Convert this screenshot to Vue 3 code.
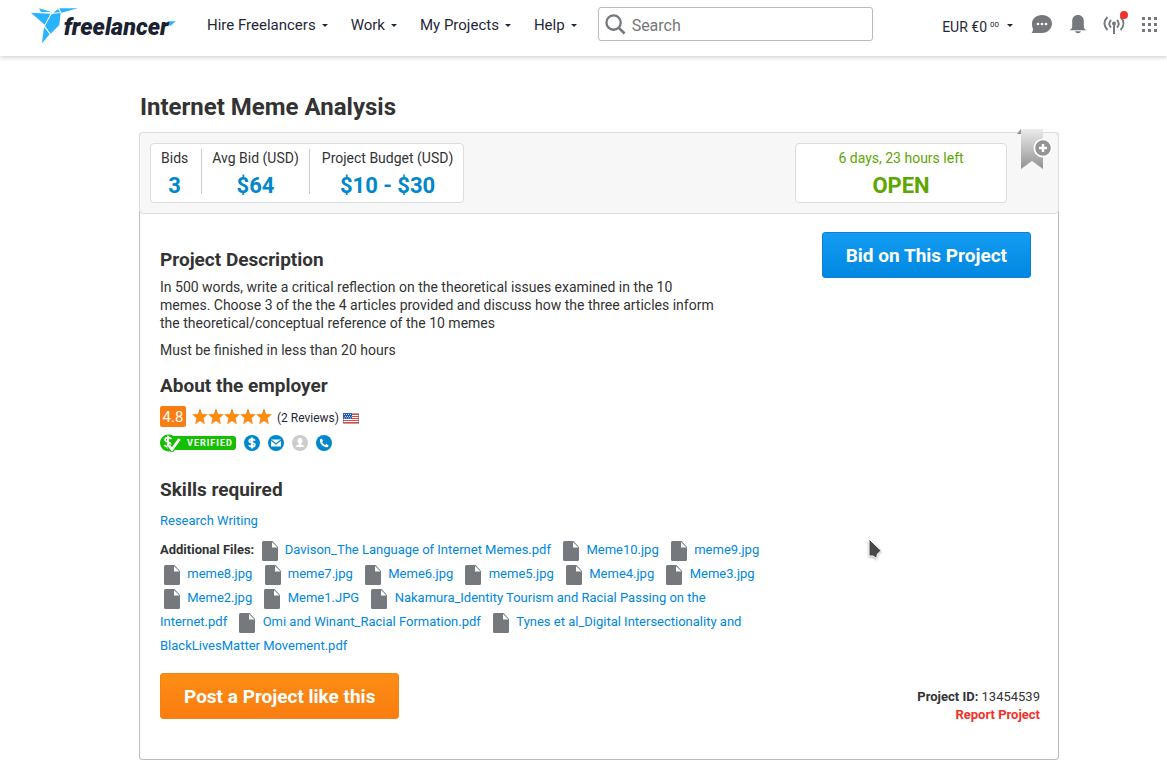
<template>
  <div class="page">
    <header class="header">
      <a href="#" class="header__logo" aria-label="freelancer">
        <svg class="logo" viewBox="93 24 435 108">
          <g fill="#29b2fe">
            <path d="M93 38L151 41L134 74Z" />
            <path d="M117 25L156 37L123 36Z" />
            <path d="M155 42L182 39L178 75L152 101L135 78Z" />
            <path d="M160 38L174 27L180 37Z" />
            <path d="M178 25H234L184 38Z" />
            <path d="M132 81L149 103L126 130Z" />
            <path d="M504 64H527L511 78L507 73Z" />
          </g>
          <text class="logo__text" x="191" y="104">freelancer</text>
        </svg>
      </a>
      <nav class="nav">
        <a v-for="item in navItems" :key="item" href="#" class="nav__link">
          {{ item }}
          <span class="caret"></span>
        </a>
      </nav>
      <label class="search">
        <svg class="search__icon" viewBox="0 0 22 22" fill="none" stroke="#75787d" stroke-width="2.400">
          <circle cx="9" cy="9" r="7.5" />
          <path d="M14.5 14.5L20.5 20.5" stroke-width="2.800" />
        </svg>
        <input class="search__input" type="text" placeholder="Search" aria-label="Search" />
      </label>
      <div class="tools">
        <a href="#" class="balance">EUR €0 <sup class="balance__cents">00</sup><span class="caret"></span></a>
        <button class="tool tool--chat" aria-label="Messages">
          <svg width="22" height="20" viewBox="0 0 22 20">
            <path d="M11 1C17 1 21 4.800 21 9.500S17 19 11 19H.5C1.500 18 2 16.500 2 15C1.300 13.500 1 11.500 1 9.500C1 4.800 5 1 11 1Z" fill="#75787d" />
            <g fill="#fff"><circle cx="7" cy="10" r="1.300" /><circle cx="11" cy="10" r="1.300" /><circle cx="15" cy="10" r="1.300" /></g>
          </svg>
        </button>
        <button class="tool tool--bell" aria-label="Notifications">
          <svg width="18" height="20" viewBox="0 0 18 20" fill="#75787d">
            <path d="M9 1C5.500 1 3.200 3.500 3.200 7V12.500C3.200 14.500 2 15.500 .2 16.300H17.800C16 15.500 14.800 14.500 14.800 12.500V7C14.800 3.500 12.500 1 9 1Z" />
            <path d="M6 17.300H12C11.500 18.600 10.500 19.200 9 19.200S6.500 18.600 6 17.300Z" />
          </svg>
        </button>
        <button class="tool tool--feed" aria-label="Feed">
          <svg width="25" height="28" viewBox="0 0 25 28">
            <g fill="none" stroke="#75787d" stroke-width="1.900">
              <path d="M4.500 7C.3 11.500 .3 15.500 4.500 20" />
              <path d="M8 10C5.700 12.500 5.700 15 8 17.500" />
              <path d="M17.500 7C21.700 11.500 21.700 15.500 17.500 20" />
              <path d="M14 10C16.300 12.500 16.300 15 14 17.500" />
              <path d="M11 13V24" stroke-width="2" />
            </g>
            <circle cx="11" cy="13.500" r="2" fill="#75787d" />
            <circle cx="21" cy="5" r="4" fill="#f0322b" />
          </svg>
        </button>
        <button class="tool" aria-label="Apps">
          <svg width="15" height="15" viewBox="0 0 15 15" fill="#75787d">
            <path d="M0 0h3v3h-3zM6 0h3v3h-3zM12 0h3v3h-3zM0 6h3v3h-3zM6 6h3v3h-3zM12 6h3v3h-3zM0 12h3v3h-3zM6 12h3v3h-3zM12 12h3v3h-3z" />
          </svg>
        </button>
      </div>
    </header>

    <main class="content">
      <h1 class="content__title">Internet Meme Analysis</h1>

      <section class="project">
        <div class="summary">
          <dl class="stats">
            <div v-for="stat in stats" :key="stat.label" class="stats__item">
              <dt class="stats__label">{{ stat.label }}</dt>
              <dd class="stats__value">{{ stat.value }}</dd>
            </div>
          </dl>
          <div class="status">
            <span class="status__time">6 days, 23 hours left</span>
            <strong class="status__state">OPEN</strong>
          </div>
          <button class="bookmark" aria-label="Bookmark project">
            <svg width="38" height="42" viewBox="0 0 38 42">
              <defs>
                <linearGradient id="ribbon" x1="0" y1="0" x2="0" y2="1">
                  <stop offset="0" stop-color="#ececec" />
                  <stop offset="1" stop-color="#929292" />
                </linearGradient>
              </defs>
              <path d="M0 5L4 0V5Z" fill="#8f8f8f" />
              <path d="M4 0H26V40L15 32L4 40Z" fill="url(#ribbon)" />
              <circle cx="26" cy="19" r="9.500" fill="#fff" />
              <circle cx="26" cy="19" r="7.800" fill="#949494" />
              <path d="M22 19H30M26 15V23" stroke="#fff" stroke-width="2.400" />
            </svg>
          </button>
        </div>

        <div class="body">
          <div class="details">
            <h2 class="heading">Project Description</h2>
            <div class="description">
              <p>In 500 words, write a critical reflection on the theoretical issues examined in the 10 memes. Choose 3 of the the 4 articles provided and discuss how the three articles inform the theoretical/conceptual reference of the 10 memes</p>
              <p>Must be finished in less than 20 hours</p>
            </div>

            <h2 class="heading heading--employer">About the employer</h2>
            <div class="rating">
              <span class="rating__score">4.8</span>
              <span class="rating__stars">
                <svg v-for="n in 5" :key="n" width="16" height="18" viewBox="0 0 16 18" fill="#fd8a13">
                  <path d="M8 0L10.200 6L16 6.200L11.500 10.200L13 16.500L8 13L3 16.500L4.500 10.200L0 6.200L5.800 6Z" />
                </svg>
              </span>
              <span class="rating__reviews">
                (2 Reviews)
                <svg width="16" height="11" viewBox="0 0 16 11" role="img" aria-label="United States">
                  <path d="M0 0H16V11H0Z" fill="#fff" />
                  <path d="M0 1.500H16M0 3.500H16M0 5.500H16M0 7.500H16M0 9.500H16" stroke="#e8452f" />
                  <path d="M0 0H9V6H0Z" fill="#1c58bd" />
                  <path d="M1 1.500H8.500M2 3.500H8.500M1 5H8.500" stroke="#c3d6f3" stroke-dasharray="1 1" />
                  <path d="M.5 .5H15.500V10.500H.5Z" fill="none" stroke="#54618e" stroke-opacity=".55" />
                </svg>
              </span>
            </div>
            <div class="badges">
              <span class="verified">
                <svg class="verified__icon" width="22" height="18" viewBox="0 0 22 18">
                  <circle cx="8.500" cy="9" r="8.500" fill="#14bf00" />
                  <path d="M11.500 5C10.500 3.800 9 3.500 7.800 3.600C5.600 3.700 4.800 5 5.300 6.300C6 8 10 7.800 10.500 10C11 12 9 13 7.300 12.800C5.800 12.600 5 11.900 4.300 11M8 1.800V14.500" fill="none" stroke="#fff" stroke-width="1.900" />
                  <path d="M9 11.500L12 15.500L19.500 5" fill="none" stroke="#14bf00" stroke-width="5" />
                  <path d="M9 11.500L12 15.500L19.500 5" fill="none" stroke="#fff" stroke-width="2.800" />
                </svg>
                VERIFIED
              </span>
              <svg width="16" height="16" viewBox="0 0 16 16">
                <circle cx="8" cy="8" r="8" fill="#0087cc" />
                <path d="M10.800 5.700C10.200 4.700 9.200 4.300 8 4.300C6.200 4.300 5.200 5.100 5.300 6.200C5.500 8.200 10.800 7.400 10.800 9.800C10.800 11 9.600 11.700 8 11.700C6.600 11.700 5.500 11.100 5 10.100M8 2.500V13.500" fill="none" stroke="#fff" stroke-width="1.900" />
              </svg>
              <svg width="16" height="16" viewBox="0 0 16 16">
                <circle cx="8" cy="8" r="8" fill="#0087cc" />
                <path d="M3 4.500H13V11.500H3Z" fill="#fff" />
                <path d="M3 5L8 9L13 5" fill="none" stroke="#0087cc" stroke-width="1.200" />
              </svg>
              <svg width="16" height="16" viewBox="0 0 16 16">
                <circle cx="8" cy="8" r="8" fill="#ccc" />
                <path d="M8 3C6.400 3 5.500 4.200 5.500 5.800C5.500 7.200 6.200 8.300 7 8.800V9.500C5.500 9.900 4 10.400 3.700 12H12.300C12 10.400 10.500 9.900 9 9.500V8.800C9.800 8.300 10.500 7.200 10.500 5.800C10.500 4.200 9.600 3 8 3Z" fill="#fff" />
              </svg>
              <svg width="16" height="16" viewBox="0 0 16 16">
                <circle cx="8" cy="8" r="8" fill="#0087cc" />
                <path d="M5.500 3.500L4 4.500C3.200 8.500 7.500 12.800 11.500 12.200L12.700 10.800L10.500 8.800L9.200 9.900C8 9.500 6.700 8.200 6.200 7L7.200 5.700Z" fill="#fff" />
              </svg>
            </div>

            <h2 class="heading heading--skills">Skills required</h2>
            <a href="#" class="skill">Research Writing</a>

            <div class="files">
              <strong>Additional Files:</strong>
              <template v-for="file in files" :key="file">
                {{ ' ' }}<svg class="files__icon" width="16" height="20" viewBox="0 0 16 20">
                  <path d="M1.500 0H10.500L16 6V18.500Q16 20 14.500 20H1.500Q0 20 0 18.500V1.500Q0 0 1.500 0Z" fill="#75787d" />
                  <path d="M10 1V6.500H15.500Z" fill="#fff" />
                </svg>&nbsp;<a href="#" class="files__link">{{ file }}</a>
              </template>
            </div>
          </div>

          <aside class="side">
            <button class="button button--bid">Bid on This Project</button>
          </aside>
        </div>

        <div class="footer">
          <button class="button button--post">Post a Project like this</button>
          <div class="footer__info">
            <div><strong>Project ID:</strong> 13454539</div>
            <a href="#" class="footer__report">Report Project</a>
          </div>
        </div>
      </section>
    </main>

    <svg class="pointer" width="14" height="22" viewBox="0 0 14 22">
      <path d="M1 1V18H5L8.500 20.500L9.500 16L13 12.500Z" fill="#484848" stroke="#fff" stroke-width="1" />
    </svg>
  </div>
</template>

<script setup>
const navItems = ['Hire Freelancers', 'Work', 'My Projects', 'Help'];

const stats = [
  { label: 'Bids', value: '3' },
  { label: 'Avg Bid (USD)', value: '$64' },
  { label: 'Project Budget (USD)', value: '$10 - $30' },
];

const files = [
  'Davison_The Language of Internet Memes.pdf',
  'Meme10.jpg',
  'meme9.jpg',
  'meme8.jpg',
  'meme7.jpg',
  'Meme6.jpg',
  'meme5.jpg',
  'Meme4.jpg',
  'Meme3.jpg',
  'Meme2.jpg',
  'Meme1.JPG',
  'Nakamura_Identity Tourism and Racial Passing on the Internet.pdf',
  'Omi and Winant_Racial Formation.pdf',
  'Tynes et al_Digital Intersectionality and BlackLivesMatter Movement.pdf',
];
</script>

<style>
body {
  margin: 0;
  background: #fff;
}
</style>

<style scoped>
.page {
  position: relative;
  font-family: Roboto, "Liberation Sans", sans-serif;
  font-size: 14px;
  line-height: 18px;
  color: #333;
}

.page * {
  box-sizing: border-box;
}

a {
  color: #0087e0;
  text-decoration: none;
}

button {
  font-family: inherit;
  cursor: pointer;
}

svg {
  flex-shrink: 0;
}

/* Header */
.header {
  display: flex;
  align-items: flex-start;
  height: 56px;
  padding: 0 10px 0 31px;
  background: #fff;
  box-shadow: 0 1px 5px rgba(0, 0, 0, 0.22);
}

.header__logo {
  display: flex;
  margin-top: 8px;
}

.logo {
  width: 145px;
  height: 36px;
}

.logo__text {
  font-family: Roboto, sans-serif;
  font-size: 70px;
  font-style: italic;
  font-weight: 900;
  fill: #1a2130;
}

.nav {
  display: flex;
  gap: 23px;
  margin-left: 31px;
}

.nav__link {
  display: flex;
  align-items: center;
  gap: 6px;
  height: 50px;
  font-size: 15px;
  color: #1f2836;
  white-space: nowrap;
}

.caret {
  display: inline-block;
  border: 3px solid transparent;
  border-top-color: currentColor;
  border-bottom: 0;
}

.search {
  display: flex;
  align-items: center;
  gap: 6px;
  flex: 0 1 275px;
  height: 34px;
  margin: 7px 0 0 21px;
  padding: 0 6px;
  border: 1px solid #bbb;
  border-radius: 3px;
}

.search__icon {
  width: 21px;
  height: 21px;
}

.search__input {
  flex: 1;
  min-width: 0;
  padding: 2px 0 0;
  border: 0;
  outline: 0;
  background: none;
  font-family: inherit;
  font-size: 16px;
  color: #333;
}

.search__input::placeholder {
  color: #777;
}

.tools {
  display: flex;
  align-items: center;
  height: 48px;
  margin-left: auto;
}

.balance {
  display: flex;
  align-items: center;
  padding-top: 6px;
  margin-right: 18px;
  color: #1f2836;
  white-space: nowrap;
}

.balance__cents {
  margin: 0 8px 4px 3px;
  font-size: 8px;
  line-height: 8px;
}

.balance .caret {
  margin-bottom: 4px;
}

.tool {
  display: flex;
  padding: 0;
  border: 0;
  background: none;
}

.tool--chat,
.tool--bell {
  margin-right: 16px;
}

.tool--feed {
  margin-right: 14px;
}

/* Project */
.content {
  padding: 36px 108px 23px 139px;
}

.content__title {
  margin: 0 0 10px 1px;
  font-size: 24px;
  line-height: 30px;
}

.project {
  border: 1px solid #bbb;
  border-top: 0;
  border-radius: 4px;
}

.summary {
  position: relative;
  display: flex;
  justify-content: space-between;
  margin: 0 -1px;
  padding: 10px 51px 10px 10px;
  border: 1px solid #ddd;
  border-radius: 4px;
  background: #f7f7f7;
}

.stats,
.status {
  display: flex;
  height: 60px;
  margin: 0;
  padding: 5px 0;
  border: 1px solid #ddd;
  border-radius: 4px;
  background: #fff;
  text-align: center;
}

.stats__item {
  height: 45px;
  padding: 0 10px;
}

.stats__item + .stats__item {
  border-left: 1px solid #ccc;
}

.stats__item:first-child {
  padding-right: 13px;
}

.stats__item:last-child {
  padding-left: 12px;
}

.stats__value,
.status__state {
  margin: 0;
  padding-top: 5px;
  font-size: 22px;
  font-weight: bold;
  line-height: 27px;
  color: #0087cc;
}

.status {
  flex-direction: column;
  width: 212px;
  color: #5da700;
}

.status__state {
  color: #5da700;
}

.bookmark {
  position: absolute;
  top: -4px;
  right: 3px;
  padding: 0;
  border: 0;
  background: none;
}

.body {
  display: flex;
  justify-content: space-between;
  padding: 18px 27px 0 20px;
}

.details {
  max-width: 608px;
  padding-top: 16px;
}

.heading {
  margin: 0 0 6px;
  font-size: 19px;
  line-height: 24px;
}

.description {
  max-width: 557px;
}

.description p {
  margin: 0 0 9px;
}

.heading--employer {
  margin: 15px 0 8px;
}

.rating {
  display: flex;
  align-items: center;
  height: 21px;
}

.rating__score {
  height: 21px;
  width: 26px;
  border-radius: 2px;
  background: #f97d13;
  font-size: 15px;
  line-height: 23px;
  color: #fff;
  text-align: center;
}

.rating__stars {
  display: flex;
  margin: 0 5px 0 6px;
}

.rating__reviews {
  display: flex;
  align-items: center;
  gap: 4px;
  padding-top: 3px;
  font-size: 12px;
  color: #1f2836;
}

.badges {
  display: flex;
  align-items: center;
  gap: 8px;
  height: 18px;
  margin-top: 7px;
}

.verified {
  position: relative;
  width: 76px;
  padding-left: 27px;
  border-radius: 3px;
  background: linear-gradient(90deg, transparent 8px, #14bf00 8px);
  font-size: 9px;
  font-weight: bold;
  letter-spacing: 1px;
  line-height: 14px;
  color: #fff;
}

.verified__icon {
  position: absolute;
  top: -2px;
  left: 0;
}

.heading--skills {
  margin: 26px 0 10px;
}

.skill {
  display: block;
  font-size: 13px;
}

.files {
  margin-top: 8px;
  font-size: 13px;
  line-height: 24px;
}

.files__icon {
  margin: 0 4px;
  vertical-align: middle;
}

.files__link {
  margin-right: 5px;
}

.button {
  height: 46px;
  padding: 1px 23px 0;
  border: 1px solid;
  border-radius: 3px;
  font-size: 19px;
  font-weight: bold;
  color: #fff;
  white-space: nowrap;
}

.button--bid {
  border-color: #0a80d8;
  background: linear-gradient(#149df3, #0087e0);
}

.button--post {
  border-color: #f28317;
  background: linear-gradient(#fd8d14, #f97d10);
}

.footer {
  display: flex;
  justify-content: space-between;
  align-items: flex-start;
  padding: 15px 18px 35px 20px;
}

.footer__info {
  padding-top: 15px;
  font-size: 13px;
  text-align: right;
}

.footer__report {
  font-weight: bold;
  color: #f0322b;
}

.pointer {
  position: absolute;
  top: 538px;
  left: 868px;
  filter: drop-shadow(0 1px 1px rgba(0, 0, 0, 0.3));
}
</style>
